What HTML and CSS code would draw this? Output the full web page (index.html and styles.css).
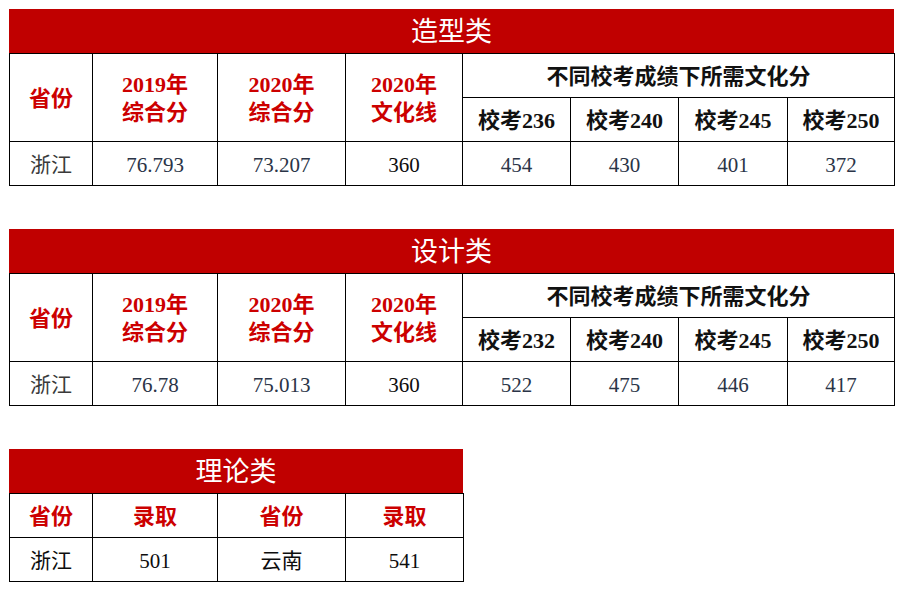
FILE: index.html
```html
<!DOCTYPE html>
<html lang="zh-CN">
<head>
<meta charset="utf-8">
<title>校考成绩</title>
<link rel="stylesheet" href="styles.css">
</head>
<body>
<section class="block wide">
  <div class="band">造型类</div>
  <table class="grid">
    <colgroup>
      <col class="c1"><col class="c2"><col class="c3"><col class="c4">
      <col class="c5"><col class="c5"><col class="c6"><col class="c7">
    </colgroup>
    <tr>
      <th rowspan="2" class="red">省份</th>
      <th rowspan="2" class="red two">2019年<br>综合分</th>
      <th rowspan="2" class="red two">2020年<br>综合分</th>
      <th rowspan="2" class="red two">2020年<br>文化线</th>
      <th colspan="4" class="dark">不同校考成绩下所需文化分</th>
    </tr>
    <tr>
      <th class="dark">校考236</th>
      <th class="dark">校考240</th>
      <th class="dark">校考245</th>
      <th class="dark">校考250</th>
    </tr>
    <tr>
      <td class="prov">浙江</td>
      <td>76.793</td>
      <td>73.207</td>
      <td class="blk">360</td>
      <td>454</td>
      <td>430</td>
      <td>401</td>
      <td>372</td>
    </tr>
  </table>
</section>

<section class="block wide">
  <div class="band">设计类</div>
  <table class="grid">
    <colgroup>
      <col class="c1"><col class="c2"><col class="c3"><col class="c4">
      <col class="c5"><col class="c5"><col class="c6"><col class="c7">
    </colgroup>
    <tr>
      <th rowspan="2" class="red">省份</th>
      <th rowspan="2" class="red two">2019年<br>综合分</th>
      <th rowspan="2" class="red two">2020年<br>综合分</th>
      <th rowspan="2" class="red two">2020年<br>文化线</th>
      <th colspan="4" class="dark">不同校考成绩下所需文化分</th>
    </tr>
    <tr>
      <th class="dark">校考232</th>
      <th class="dark">校考240</th>
      <th class="dark">校考245</th>
      <th class="dark">校考250</th>
    </tr>
    <tr>
      <td class="prov">浙江</td>
      <td>76.78</td>
      <td>75.013</td>
      <td class="blk">360</td>
      <td>522</td>
      <td>475</td>
      <td>446</td>
      <td>417</td>
    </tr>
  </table>
</section>

<section class="block narrow">
  <div class="band">理论类</div>
  <table class="grid">
    <colgroup>
      <col class="c1"><col class="c2"><col class="c3"><col class="c8">
    </colgroup>
    <tr>
      <th class="red">省份</th>
      <th class="red">录取</th>
      <th class="red">省份</th>
      <th class="red">录取</th>
    </tr>
    <tr>
      <td class="prov blk">浙江</td>
      <td class="blk">501</td>
      <td class="prov blk">云南</td>
      <td class="blk">541</td>
    </tr>
  </table>
</section>
</body>
</html>
```

FILE: styles.css
```css
html, body {
  margin: 0;
  padding: 0;
  background: #ffffff;
}

body {
  padding: 9px 0 0 9px;
  font-family: "Liberation Serif", "Noto Sans CJK SC", serif;
}

.block {
  margin-bottom: 43px;
}

.block:last-child {
  margin-bottom: 0;
}

.wide { width: 885px; }
.narrow { width: 454px; }

.band {
  box-sizing: border-box;
  height: 44px;
  padding-top: 3px;
  background: #c00000;
  color: #ffffff;
  font-size: 27px;
  line-height: 41px;
  text-align: center;
}

.grid {
  width: 100%;
  border-collapse: collapse;
  table-layout: fixed;
}

.c1 { width: 83px; }
.c2 { width: 125px; }
.c3 { width: 128px; }
.c4 { width: 117px; }
.c5 { width: 108px; }
.c6 { width: 109px; }
.c7 { width: 107px; }
.c8 { width: 118px; }

.grid tr { height: 44px; }

.grid th,
.grid td {
  border: 1px solid #000000;
  padding: 0;
  text-align: center;
  vertical-align: middle;
  white-space: nowrap;
}

.grid th {
  padding-top: 2px;
  font-size: 22px;
  font-weight: bold;
  line-height: 28px;
}

.grid th.red { color: #cc0000; }
.grid th.dark { color: #111111; }

.grid td {
  padding-top: 3px;
  font-size: 21px;
  font-weight: normal;
  line-height: 26px;
  color: #2a3447;
}

.grid td.prov { color: #3a3a3a; }
.grid td.blk { color: #0d0d0d; }
```
